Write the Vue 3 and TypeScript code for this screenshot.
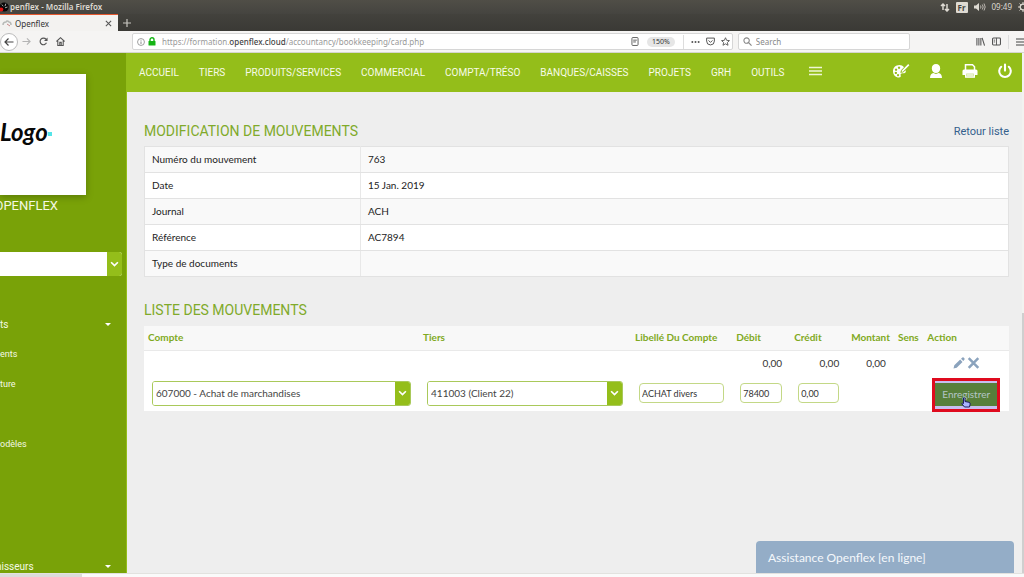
<script setup lang="ts">
import { ref } from 'vue'

interface Detail { label: string; value: string }
interface MenuEntry { label: string; big?: boolean; caret?: boolean }

const nav: string[] = ['ACCUEIL', 'TIERS', 'PRODUITS/SERVICES', 'COMMERCIAL', 'COMPTA/TRÉSO', 'BANQUES/CAISSES', 'PROJETS', 'GRH', 'OUTILS']

const details: Detail[] = [
  { label: 'Numéro du mouvement', value: '763' },
  { label: 'Date', value: '15 Jan. 2019' },
  { label: 'Journal', value: 'ACH' },
  { label: 'Référence', value: 'AC7894' },
  { label: 'Type de documents', value: '' },
]

const menu: MenuEntry[] = [
  { label: 'ts', big: true, caret: true },
  { label: 'ents' },
  { label: 'ture' },
  { label: '' },
  { label: 'odèles' },
]

const columns: string[] = ['Compte', 'Tiers', 'Libellé Du Compte', 'Débit', 'Crédit', 'Montant', 'Sens', 'Action']

const url = ref('')
const search = ref('')
const company = ref('')
const account = ref('607000 - Achat de marchandises')
const third = ref('411003 (Client 22)')
const label = ref('ACHAT divers')
const debit = ref('78400')
const credit = ref('0,00')
</script>

<template>
  <div class="screen">
    <div class="system-bar">
      <svg class="app-mark" viewBox="0 0 12 12" aria-hidden="true">
        <circle cx="5" cy="6" r="5.5" fill="#080808" />
        <path d="M2 3l2 2M7 2L6 5M9 6L6 7" stroke="#aaa" stroke-width="1.2" />
        <circle cx="1.5" cy="9" r="2.5" fill="#e01010" />
      </svg>
      <span class="window-title">penflex - Mozilla Firefox</span>
      <div class="indicators">
        <svg viewBox="0 0 10 10" width="10" height="10" aria-hidden="true">
          <path d="M3 8V2M1 4l2-2 2 2M7 2v7M5 7l2 2 2-2" fill="none" stroke="#dedad2" stroke-width="1.5" />
        </svg>
        <span class="lang">Fr</span>
        <svg viewBox="0 0 12 10" width="12" height="10" aria-hidden="true">
          <path d="M0 3.5h2L5 1v8L2 6.500H0z" fill="#dedad2" />
          <path d="M6.500 3.500q1 1.500 0 3M8.300 2.500q1.800 2.500 0 5M10 1.500q2.400 3.500 0 7" fill="none" stroke="#c9c5bd" stroke-width="0.9" />
        </svg>
        <span class="clock">09:49</span>
        <svg viewBox="0 0 10 10" width="10" height="10" aria-hidden="true">
          <circle cx="5" cy="5" r="2.800" fill="none" stroke="#dedad2" stroke-width="1.300" />
          <path d="M5 0v2M5 8v2M0 5h2M8 5h2M1.500 1.500l1.300 1.300M7.200 7.200l1.300 1.300M8.500 1.500L7.200 2.800M2.800 7.200L1.500 8.500" stroke="#dedad2" />
        </svg>
      </div>
    </div>

    <div class="tab-strip">
      <div class="tab">
        <svg viewBox="0 0 10 8" width="10" height="8" aria-hidden="true">
          <path d="M1 6q0-3 3-3 1-2 3 0 2 0 2 3" fill="none" stroke="#b7bab7" stroke-width="1.500" />
          <path d="M5 5l3 2" stroke="#c78787" />
        </svg>
        <span class="tab-name">Openflex</span>
        <button class="bare" aria-label="Fermer l'onglet">
          <svg viewBox="0 0 8 8" width="7" height="7"><path d="M1 1l6 6M7 1L1 7" stroke="#555" stroke-width="1.200" /></svg>
        </button>
      </div>
      <button class="bare new-tab" aria-label="Nouvel onglet">
        <svg viewBox="0 0 8 8" width="8" height="8"><path d="M4 0v8M0 4h8" stroke="#c8c6c0" stroke-width="1.200" /></svg>
      </button>
    </div>

    <div class="toolbar">
      <div class="history">
        <button class="bare back" aria-label="Précédent">
          <svg viewBox="0 0 10 10" width="10" height="10"><path d="M9.500 5H1M4.500 1.500L1 5l3.500 3.500" fill="none" stroke="#444" stroke-width="1.200" /></svg>
        </button>
        <button class="bare" aria-label="Suivant">
          <svg viewBox="0 0 10 10" width="9" height="9"><path d="M0.500 5H9M5.500 1.500L9 5 5.500 8.500" fill="none" stroke="#b4b4b4" stroke-width="1.200" /></svg>
        </button>
        <button class="bare" aria-label="Actualiser">
          <svg viewBox="0 0 10 10" width="9" height="9"><path d="M8.300 6.500A3.700 3.700 0 1 1 7.800 2.500" fill="none" stroke="#555" stroke-width="1.300" /><path d="M9.500 0.500v4H5.500z" fill="#555" /></svg>
        </button>
        <button class="bare" aria-label="Accueil du navigateur">
          <svg viewBox="0 0 10 10" width="9" height="9"><path d="M0.500 5L5 0.800 9.500 5M2 4.500v5h6v-5M4.200 9V6h1.600v3" fill="none" stroke="#555" stroke-width="1.200" /></svg>
        </button>
      </div>
      <div class="address">
        <svg viewBox="0 0 10 10" width="8" height="8" aria-hidden="true"><circle cx="5" cy="5" r="4.300" fill="none" stroke="#888" /><path d="M5 4.300v3.200M5 2.300v1" stroke="#888" stroke-width="1.200" /></svg>
        <svg viewBox="0 0 8 9" width="8" height="9" aria-hidden="true"><path d="M2 4V2.800a2 2 0 0 1 4 0V4" fill="none" stroke="#14b414" stroke-width="1.400" /><rect x="0.500" y="4" width="7" height="4.600" rx="0.600" fill="#14b414" /></svg>
        <label class="url">
          <span>https://formation.<b>openflex.cloud</b>/accountancy/bookkeeping/card.php</span>
          <input v-model="url" aria-label="Adresse" />
        </label>
        <div class="page-tools">
          <svg viewBox="0 0 8 10" width="8" height="9" aria-hidden="true"><rect x="0.600" y="0.600" width="6.800" height="8.800" rx="1" fill="none" stroke="#555" /><path d="M2 3.500h4M2 5.500h3" stroke="#555" /></svg>
          <span class="zoom">150%</span>
          <i class="rule"></i>
        </div>
        <svg viewBox="0 0 10 4" width="9" height="4" aria-hidden="true"><circle cx="1.500" cy="2" r="1.100" fill="#555" /><circle cx="5" cy="2" r="1.100" fill="#555" /><circle cx="8.500" cy="2" r="1.100" fill="#555" /></svg>
        <svg viewBox="0 0 10 10" width="9" height="9" aria-hidden="true"><path d="M0.700 1.200h8.600v3.300a4.300 4.300 0 0 1-8.600 0zM2.800 3.800L5 6l2.200-2.200" fill="none" stroke="#555" stroke-width="1.100" /></svg>
        <svg viewBox="0 0 10 10" width="9" height="9" aria-hidden="true"><path d="M5 0.800l1.300 2.900 3.100.3-2.300 2.100.7 3.100L5 7.600 2.200 9.200l.7-3.100L.6 4l3.100-.3z" fill="none" stroke="#555" /></svg>
      </div>
      <div class="search">
        <svg viewBox="0 0 10 10" width="9" height="9" aria-hidden="true"><circle cx="4" cy="4" r="3" fill="none" stroke="#888" stroke-width="1.200" /><path d="M6.200 6.200L9.500 9.500" stroke="#888" stroke-width="1.300" /></svg>
        <input v-model="search" placeholder="Search" aria-label="Search" />
      </div>
      <div class="tools">
        <svg viewBox="0 0 10 10" width="9" height="9" aria-hidden="true"><path d="M1 1v8.500M3.200 1v8.500M5.400 1v8.500M6.800 1L9.500 9.500" stroke="#555" stroke-width="1.200" /></svg>
        <svg viewBox="0 0 10 10" width="9" height="9" aria-hidden="true"><rect x="0.600" y="1.200" width="8.800" height="7.600" rx="1" fill="none" stroke="#555" stroke-width="1.200" /><path d="M5 1v8M2 3.500h1.500M2 5.500h1.500" stroke="#555" /></svg>
        <i class="rule"></i>
        <svg viewBox="0 0 8 8" width="8" height="8" aria-hidden="true"><path d="M0 1h8M0 4h8M0 7h8" stroke="#444" stroke-width="1.200" /></svg>
      </div>
    </div>

    <div class="app">
      <aside class="sidebar">
        <div class="logo"><span>Logo</span><i></i></div>
        <div class="company">OPENFLEX</div>
        <label class="picker side-picker">
          <select v-model="company" aria-label="Recherche"><option value=""></option></select>
          <span class="arrow"><svg viewBox="0 0 8 6" width="9" height="7"><path d="M1 1l3 3 3-3" /></svg></span>
        </label>
        <nav class="side-menu" aria-label="Menu latéral">
          <a v-for="(entry, i) in menu" :key="i" href="#" :class="{ big: entry.big }">
            <span>{{ entry.label }}</span>
            <i v-if="entry.caret" class="caret"></i>
          </a>
        </nav>
        <a class="side-last" href="#"><span>nisseurs</span><i class="caret"></i></a>
      </aside>

      <div class="main">
        <header class="topnav">
          <nav aria-label="Menu principal">
            <a v-for="item in nav" :key="item" href="#">{{ item }}</a>
            <button class="bare" aria-label="Plus">
              <svg viewBox="0 0 13 10" width="13" height="10"><path d="M0 1.500h13M0 5h13M0 8.500h13" stroke="#eef7d5" stroke-width="1.500" /></svg>
            </button>
          </nav>
          <div class="actions">
            <button class="bare" aria-label="Thème">
              <svg viewBox="0 0 18 16" width="18" height="16">
                <path fill="#fff" fill-rule="evenodd" d="M7.500 2C3.500 2 1 4.800 1 8.200S3.500 14.500 7 14.500c1.500 0 2-1 1.700-2-.4-1.300.3-2.200 1.800-2.200h1.500c1.500 0 2.200-1.500 1.700-3L11 9.500 8.300 9.700 9 7.200l3-3C10.800 2.700 9.200 2 7.500 2zM7 3.500a1.200 1.200 0 1 0 .1 0zM4 5.500a1.200 1.200 0 1 0 .1 0zM3.800 8.700a1.200 1.200 0 1 0 .1 0zM6 11a1.100 1.100 0 1 0 .1 0z" />
                <path d="M10 8.500L16.800 1.600" stroke="#fff" stroke-width="1.700" />
              </svg>
            </button>
            <button class="bare" aria-label="Utilisateur">
              <svg viewBox="0 0 14 16" width="14" height="16"><path fill="#fff" d="M7 1c2.600 0 4.200 1.800 4.200 4.400S9.500 10 7 10 2.800 8 2.800 5.400 4.400 1 7 1zM1 15c0-3 1.400-4.400 3.400-4.900q2.600 1.600 5.200 0C11.600 10.600 13 12 13 15z" /></svg>
            </button>
            <button class="bare" aria-label="Imprimer">
              <svg viewBox="0 0 16 16" width="16" height="16"><path fill="none" stroke="#fff" stroke-width="1.500" d="M3.500 7V1.800h7l2 2V7" /><path fill="#fff" d="M2 6.500h12q1.500 0 1.500 1.500v4H13V10H3v2H.5V8q0-1.500 1.500-1.500z" /><path fill="#cfe39a" stroke="#fff" stroke-width="1.200" d="M3.600 10h8.800v4.200H3.600z" /><path stroke="#fff" d="M5 12h6" /></svg>
            </button>
            <button class="bare" aria-label="Déconnexion">
              <svg viewBox="0 0 16 16" width="16" height="16"><path fill="none" stroke="#fff" stroke-width="2.100" stroke-linecap="round" d="M4.200 3.800a5.800 5.800 0 1 0 7.600 0M8 1.600v6" /></svg>
            </button>
          </div>
        </header>

        <main class="content">
          <div class="title-row">
            <h1>MODIFICATION DE MOUVEMENTS</h1>
            <a href="#">Retour liste</a>
          </div>
          <table class="details">
            <tbody>
              <tr v-for="row in details" :key="row.label">
                <th scope="row">{{ row.label }}</th>
                <td>{{ row.value }}</td>
              </tr>
            </tbody>
          </table>

          <h2>LISTE DES MOUVEMENTS</h2>
          <table class="moves">
            <colgroup>
              <col v-for="n in columns.length" :key="n" :class="'c' + n" />
            </colgroup>
            <thead>
              <tr><th v-for="c in columns" :key="c" scope="col">{{ c }}</th></tr>
            </thead>
            <tbody>
              <tr class="totals">
                <td></td><td></td><td></td>
                <td>0,00</td><td>0,00</td><td>0,00</td>
                <td></td>
                <td class="row-actions">
                  <div>
                    <button class="bare" aria-label="Modifier">
                      <svg viewBox="0 0 12 12" width="12" height="12"><path fill="#8ba3bd" d="M0.500 11.500l.8-3.300 5.900-5.700 2.300 2.400-5.800 5.800zM8 1.800L9.400.5q.6-.5 1.200 0l.9 1q.5.500 0 1.100l-1.200 1.500z" /></svg>
                    </button>
                    <button class="bare" aria-label="Supprimer">
                      <svg viewBox="0 0 12 12" width="13" height="12"><path d="M1.200 1.200l9.600 9.600M10.800 1.200l-9.600 9.600" stroke="#8ba3bd" stroke-width="2.500" /></svg>
                    </button>
                  </div>
                </td>
              </tr>
              <tr class="edit">
                <td>
                  <label class="picker">
                    <select v-model="account" aria-label="Compte"><option>607000 - Achat de marchandises</option></select>
                    <span class="arrow"><svg viewBox="0 0 8 6" width="9" height="7"><path d="M1 1l3 3 3-3" /></svg></span>
                  </label>
                </td>
                <td>
                  <label class="picker">
                    <select v-model="third" aria-label="Tiers"><option>411003 (Client 22)</option></select>
                    <span class="arrow"><svg viewBox="0 0 8 6" width="9" height="7"><path d="M1 1l3 3 3-3" /></svg></span>
                  </label>
                </td>
                <td><input v-model="label" aria-label="Libellé du compte" /></td>
                <td><input v-model="debit" aria-label="Débit" /></td>
                <td><input v-model="credit" aria-label="Crédit" /></td>
                <td></td>
                <td></td>
                <td class="save-cell">
                  <div class="save-wrap">
                    <button class="save">Enregistrer</button>
                    <svg class="pointer" viewBox="0 0 10 11" width="10" height="11" aria-hidden="true"><path d="M2.500 1q1-.8 1.500.3V4.500l4 .8q1.300.4 1.200 1.700L8.500 10H3.500L.8 6.800Q1 5.600 2.500 6.500z" fill="#aab4ff" stroke="#1c1c60" /></svg>
                  </div>
                </td>
              </tr>
            </tbody>
          </table>
        </main>
        <button class="assist">Assistance Openflex [en ligne]</button>
      </div>
      <div class="scrollbar"><i></i></div>
    </div>
    <div class="status"><i></i></div>
  </div>
</template>

<style>
html, body { background: #eee; }
</style>

<style scoped>
* { box-sizing: border-box; }
.screen {
  min-height: 100vh;
  display: flex;
  flex-direction: column;
  overflow: hidden;
  font-family: "Noto Sans", sans-serif;
  font-size: 10px;
  color: #333;
}
svg { display: block; flex: none; }
a { text-decoration: none; color: inherit; }
i { font-style: normal; }
input, select, button { font: inherit; color: inherit; }
.bare { border: 0; padding: 0; background: none; display: flex; align-items: center; justify-content: center; flex: none; }

.system-bar {
  height: 14px;
  display: flex;
  align-items: center;
  background: linear-gradient(#504e47, #454440);
  color: #dedad2;
  font-size: 8px;
  line-height: 14px;
}
.app-mark { width: 10px; height: 12px; }
.window-title { font-weight: 600; flex: 1; }
.indicators { display: flex; align-items: center; gap: 6px; margin-right: -4px; }
.lang { background: #dedad2; color: #45443f; font-weight: 700; line-height: 11px; padding: 0 2px; border-radius: 1px; }

.tab-strip { height: 17px; display: flex; background: linear-gradient(#43423d, #3a3935); }
.tab {
  width: 118px;
  display: flex;
  align-items: center;
  gap: 3px;
  padding: 0 6px 0 2px;
  background: #f3f2f0;
  border-top: 1px solid #e4572e;
  font-size: 8px;
}
.tab-name { flex: 1; }
.new-tab { width: 18px; }

.toolbar {
  height: 22px;
  display: flex;
  align-items: center;
  background: #f5f4f3;
  font-size: 8px;
  border-bottom: 1px solid #d5d5cf;
}
.history { width: 132px; display: flex; align-items: center; gap: 8px; }
.back { width: 18px; height: 18px; border: 1px solid #bbb; border-radius: 50%; background: #fff; margin-right: -4px; }
.address, .search {
  display: flex;
  align-items: center;
  height: 17px;
  background: #fff;
  border: 1px solid #d6d6d6;
  border-radius: 2px;
}
.address { flex: 607; gap: 6px; padding: 0 2px 0 4px; margin-right: 5px; }
.address > svg:first-child { margin-right: -3px; }
.page-tools { display: flex; align-items: center; gap: 8px; margin-right: 1px; }
.url { flex: 1; position: relative; color: #999; line-height: 15px; white-space: nowrap; }
.url b { color: #444; font-weight: 500; }
.url input { position: absolute; inset: 0; width: 100%; border: 0; padding: 0; background: transparent; }
.zoom { background: #e6e6e6; border-radius: 6px; padding: 0 5px; font-size: 7px; line-height: 10px; }
.rule { width: 1px; height: 14px; background: #ddd; }
.search { flex: 166; gap: 4px; padding: 0 4px; }
.search input { flex: 1; min-width: 0; border: 0; padding: 0; background: transparent; outline: 0; }
.search input::placeholder { color: #888; opacity: 1; }
.tools { width: 114px; display: flex; align-items: center; justify-content: flex-end; gap: 7px; }

.app { flex: 1; display: flex; }
.sidebar {
  width: 127px;
  flex: none;
  display: flex;
  flex-direction: column;
  background: #79a208;
  border-right: 1px solid #93bd1b;
  color: #f4f9e4;
  font-family: Roboto, sans-serif;
  font-size: 10px;
}
.logo {
  width: 86px;
  height: 121px;
  margin-top: 21px;
  padding-bottom: 6px;
  display: flex;
  align-items: center;
  background: #fff;
  box-shadow: 0 2px 7px #00000040;
  color: #080808;
  font-family: Lato, sans-serif;
  font-size: 24px;
  font-style: italic;
  font-weight: 700;
}
.logo i { width: 4px; height: 4px; margin-top: 4px; background: #55e4e8; }
.company { width: 58px; display: flex; justify-content: flex-end; overflow: hidden; font-size: 13px; line-height: 22px; }
.side-picker.picker { width: 122px; height: 24px; margin-top: 35px; border: 0; border-radius: 0 3px 3px 0; }
.side-menu { margin-top: 33px; }
.side-menu a, .side-last { display: flex; align-items: center; justify-content: space-between; height: 30px; padding-right: 15px; }
.side-menu a { font-size: 9px; }
.side-menu a.big { font-size: 10px; }
.side-last { margin-top: auto; margin-bottom: -8px; font-size: 10px; }
.side-last span { margin-left: -4px; }
.caret { border: 3px solid transparent; border-top-color: #fff; border-bottom: 0; }

.main { flex: 1; min-width: 0; position: relative; background: #eee; }
.topnav {
  height: 39px;
  display: flex;
  align-items: center;
  justify-content: space-between;
  background: #94be1a;
  color: #f7fbe8;
  padding: 0 9px 0 12px;
  font-family: Roboto, sans-serif;
}
.topnav nav, .actions { display: flex; align-items: center; }
.topnav nav { gap: 20px; }
.topnav nav .bare { margin: 0 0 4px 4px; }
.actions { gap: 19px; margin-bottom: 3px; }

.content { padding: 29px 13px 0 17px; }
.title-row { display: flex; justify-content: space-between; align-items: center; height: 20px; }
.title-row a { color: #34608c; font-family: Roboto, sans-serif; font-size: 11px; }
h1, h2 { margin: 0; font-family: Roboto, sans-serif; font-size: 14px; font-weight: 400; line-height: 20px; color: #80aa2a; }
h2 { margin-top: 23px; }
table { width: 100%; table-layout: fixed; border-collapse: collapse; background: #fff; font-family: Lato, "Noto Sans", sans-serif; }
.details { margin-top: 5px; border: 1px solid #e2e2e2; }
.details th, .details td { height: 26px; padding: 0 7px 2px; text-align: left; font-weight: 400; color: #222; border-bottom: 1px solid #e2e2e2; }
.details th { width: 25%; border-right: 1px solid #e8e8e8; }
.details tr:nth-child(odd) { background: #f9f9f9; }

.moves { margin-top: 6px; }
.c1 { width: 31.8%; }
.c2 { width: 24.5%; }
.c3 { width: 11.7%; }
.c4 { width: 6.7%; }
.c5 { width: 6.6%; }
.c6 { width: 5.4%; }
.c7 { width: 3.4%; }
.c8 { width: 9.9%; }
.moves thead { background: #f8f8f8; }
.moves th { height: 24px; padding: 0 4px 2px; text-align: left; white-space: nowrap; color: #7fa922; font-weight: 700; border-bottom: 1px solid #e9e9e9; }
.moves td { padding: 0 8px; }
.totals td { height: 25px; text-align: right; }
.row-actions div { display: flex; justify-content: center; gap: 2px; }
.edit td { height: 36px; }
.edit td input {
  display: block;
  width: 100%;
  height: 20px;
  padding: 0 2px;
  border: 1px solid #c3d886;
  border-radius: 4px;
  background: #fff;
  font-size: 9px;
}
.picker { display: flex; height: 25px; border: 1px solid #a9c95a; border-radius: 3px; background: #fff; overflow: hidden; }
.picker select { flex: 1; min-width: 0; appearance: none; border: 0; padding: 0 3px; background: #fff; color: #444; }
.arrow { width: 15px; display: flex; align-items: center; justify-content: center; background: #94be1a; }
.arrow path { fill: none; stroke: #fff; stroke-width: 1.5; }
.edit .save-cell { padding: 0; }
.save-wrap {
  position: relative;
  width: 68px;
  height: 34px;
  margin: 3px auto -1px;
  padding: 2px 0;
  border: 3px solid #df0a1e;
  background: #c8bff0;
}
.save { display: block; width: 100%; height: 23px; border: 0; padding: 0 0 2px; background: #587f3b; color: #b3c5c6; }
.pointer { position: absolute; left: 26px; top: 16px; }
.assist {
  position: absolute;
  right: 8px;
  bottom: 0;
  width: 258px;
  height: 32px;
  border: 0;
  border-radius: 4px 4px 0 0;
  padding: 0 12px;
  background: #94adc7;
  color: #f4f8fc;
  text-align: left;
  font-family: Lato, sans-serif;
  font-size: 12px;
}
.scrollbar { width: 2px; background: #f2f2f0; display: flex; align-items: flex-end; }
.scrollbar i { width: 2px; height: 50%; background: #cfcfcf; }
.status { height: 4px; background: #fafafa; border-top: 1px solid #e2e2df; }
.status i { display: block; width: 82px; height: 3px; background: #dcdcda; }
</style>
